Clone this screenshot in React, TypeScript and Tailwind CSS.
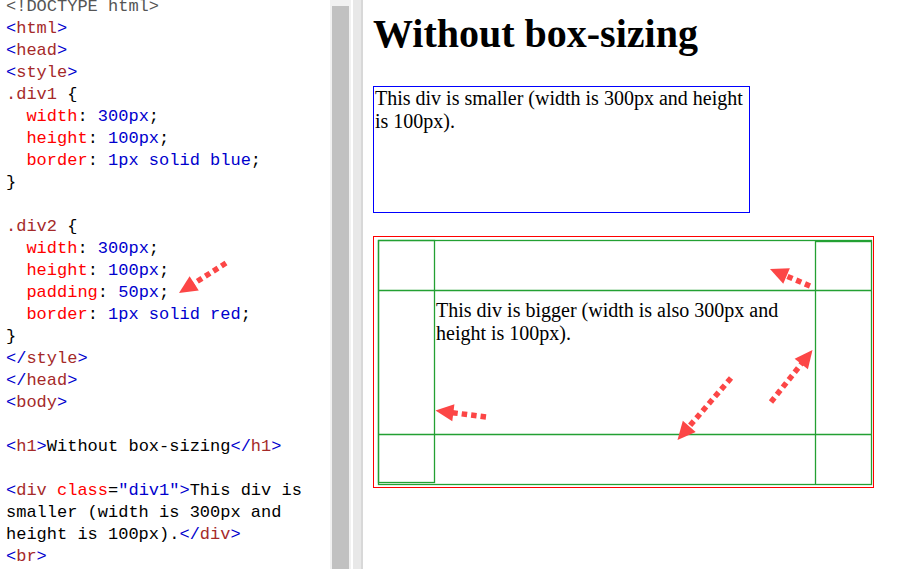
import React from "react";

type Seg = [string, string];

const B = "#0000cd"; // brackets / values
const T = "#a52a2a"; // tag names / selectors
const R = "#ff0000"; // properties / attrs
const K = "#000000";
const M = "#555555";

const lines: Seg[][] = [
  [["<!DOCTYPE html>", M]],
  [["<", B], ["html", T], [">", B]],
  [["<", B], ["head", T], [">", B]],
  [["<", B], ["style", T], [">", B]],
  [[".div1", T], [" {", K]],
  [["  ", K], ["width", R], [": ", K], ["300px", B], [";", K]],
  [["  ", K], ["height", R], [": ", K], ["100px", B], [";", K]],
  [["  ", K], ["border", R], [": ", K], ["1px solid blue", B], [";", K]],
  [["}", K]],
  [[" ", K]],
  [[".div2", T], [" {", K]],
  [["  ", K], ["width", R], [": ", K], ["300px", B], [";", K]],
  [["  ", K], ["height", R], [": ", K], ["100px", B], [";", K]],
  [["  ", K], ["padding", R], [": ", K], ["50px", B], [";", K]],
  [["  ", K], ["border", R], [": ", K], ["1px solid red", B], [";", K]],
  [["}", K]],
  [["</", B], ["style", T], [">", B]],
  [["</", B], ["head", T], [">", B]],
  [["<", B], ["body", T], [">", B]],
  [[" ", K]],
  [["<", B], ["h1", T], [">", B], ["Without box-sizing", K], ["</", B], ["h1", T], [">", B]],
  [[" ", K]],
  [["<", B], ["div", T], [" ", K], ["class", R], ["=", K], ['"div1"', B], [">", B], ["This div is", K]],
  [["smaller (width is 300px and", K]],
  [["height is 100px).", K], ["</", B], ["div", T], [">", B]],
  [["<", B], ["br", T], [">", B]],
  [[" ", K]],
];

function Arrow({ x1, y1, x2, y2 }: { x1: number; y1: number; x2: number; y2: number }) {
  const dx = x2 - x1;
  const dy = y2 - y1;
  const len = Math.sqrt(dx * dx + dy * dy);
  const ux = dx / len;
  const uy = dy / len;
  const L = 18;
  const W = 8.5;
  const bx = x2 - ux * L;
  const by = y2 - uy * L;
  const px = -uy;
  const py = ux;
  const pts = `${x2},${y2} ${bx + px * W},${by + py * W} ${bx - px * W},${by - py * W}`;
  return (
    <g>
      <line
        x1={x1}
        y1={y1}
        x2={bx + ux * 1}
        y2={by + uy * 1}
        stroke="#fc4646"
        strokeWidth={5.5}
        strokeDasharray="5.5 4"
        strokeLinecap="butt"
      />
      <polygon points={pts} fill="#fc4646" />
    </g>
  );
}

export default function App() {
  const G = "#23a033";
  return (
    <div className="relative flex h-[569px] w-[899px] overflow-hidden bg-white">
      {/* code editor */}
      <div
        className="w-[330px] shrink-0 overflow-hidden pl-[6px] text-[17px] leading-[22px]"
        style={{ fontFamily: '"Liberation Mono", "DejaVu Sans Mono", monospace' }}
      >
        <div className="mt-[-4px]">
          {lines.map((segs, i) => (
            <div key={i} className="h-[22px] whitespace-pre">
              {segs.map(([t, c], j) => (
                <span key={j} style={{ color: c }}>
                  {t}
                </span>
              ))}
            </div>
          ))}
        </div>
      </div>

      {/* scrollbar */}
      <div className="flex w-[21px] shrink-0 flex-col bg-[#f1f1f1] px-[2px] pt-[6px]">
        <div className="flex-1 bg-[#c1c1c1]" />
      </div>
      <div className="w-[2px] shrink-0 bg-white" />
      <div className="w-[8px] shrink-0 bg-[#e8e8e8]" />
      <div className="w-[2px] shrink-0 bg-[#d8d8d8]" />

      {/* result */}
      <div
        className="flex-1 pl-[10px] text-black"
        style={{ fontFamily: '"Liberation Serif", "Times New Roman", serif' }}
      >
        <h1 className="mt-[11px] mb-[29px] text-[40px] font-bold leading-[46px]">Without box-sizing</h1>
        <div className="box-border h-[127px] w-[377px] border border-[#0000ff] pl-[1px] text-[20px] leading-[23px]">
          This div is smaller (width is 300px and height is 100px).
        </div>
        <div className="mt-[23px] box-border h-[252px] w-[501px] border border-[#ff0000] p-[62px] text-[20px] leading-[23px]">
          This div is bigger (width is also 300px and height is 100px).
        </div>
      </div>

      {/* annotation overlay */}
      <svg
        className="pointer-events-none absolute left-0 top-0"
        width={899}
        height={569}
        viewBox="0 0 899 569"
      >
        <g stroke={G} strokeWidth={1.3} fill="none">
          <rect x={378.5} y={240.5} width={493} height={244} />
          <rect x={378.5} y={240.5} width={56} height={242} />
          <line x1={378} y1={290.5} x2={871} y2={290.5} />
          <line x1={378} y1={434.5} x2={871} y2={434.5} />
          <line x1={815.5} y1={240} x2={815.5} y2={484} />
        </g>
        <rect x={815} y={240} width={57} height={2.2} fill={G} />
        <Arrow x1={226} y1={263} x2={179} y2={293} />
        <Arrow x1={810} y1={286} x2={770} y2={269} />
        <Arrow x1={486} y1={417} x2={435.5} y2={410.5} />
        <Arrow x1={731} y1={378} x2={677.5} y2={440} />
        <Arrow x1={771} y1={402} x2={812.5} y2={350} />
      </svg>
    </div>
  );
}
